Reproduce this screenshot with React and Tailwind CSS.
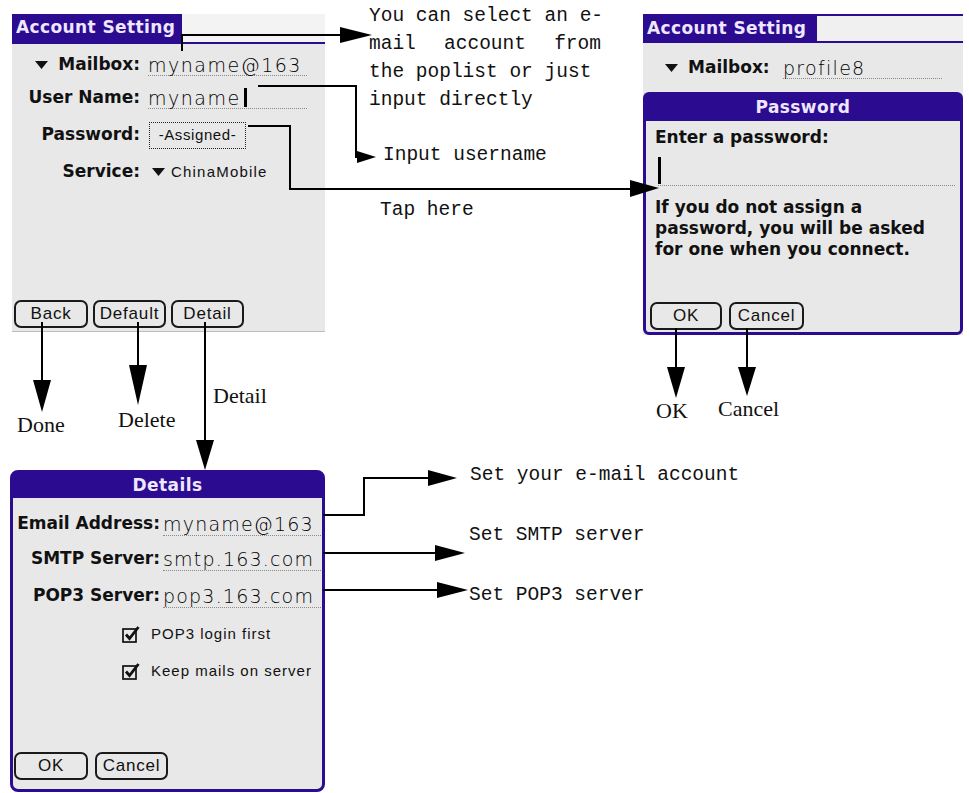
import React from "react";

const bold = "font-['DejaVu_Sans',sans-serif] font-bold";
const thin = "font-['DejaVu_Sans',sans-serif] font-extralight";
const small = "font-['Liberation_Sans',sans-serif]";
const mono = "font-['Liberation_Mono',monospace] text-[19.5px] leading-[28px] text-[#111] whitespace-pre";
const serif = "font-['Liberation_Serif',serif] text-[22px] leading-[28px] text-[#111]";

function Tri() {
  return (
    <svg width="13" height="8" viewBox="0 0 13 8" className="shrink-0">
      <path d="M0 0H13L6.5 8Z" fill="#111" />
    </svg>
  );
}

function Check() {
  return (
    <svg width="18" height="18" viewBox="0 0 18 18" className="shrink-0">
      <rect x="1" y="4" width="13" height="13" fill="none" stroke="#111" strokeWidth="1.7" />
      <path d="M4 9.5 L7.5 13.5 L16.5 2" fill="none" stroke="#111" strokeWidth="2.8" />
    </svg>
  );
}

function PalmButton({ children, className }) {
  return (
    <div
      className={`h-[28px] border-2 border-[#1a1a1a] rounded-[7px] flex items-center justify-center text-[17px] tracking-[0.8px] text-[#111] ${small} ${className}`}
    >
      {children}
    </div>
  );
}

function Arrows() {
  const tri = (pts) => <polygon points={pts} fill="#000" />;
  const ln = (d) => <path d={d} fill="none" stroke="#000" strokeWidth="2" />;
  return (
    <svg width="969" height="793" viewBox="0 0 969 793" className="absolute left-0 top-0 pointer-events-none">
      {ln("M182 51 V35 H342")}
      {tri("340,27 340,43 372,35")}
      {ln("M258 86 H356 V157 H360")}
      {tri("357,151 357,163 376,157")}
      {ln("M248 126 H290 V189 H632")}
      {tri("630,180 630,197 659,188")}
      {ln("M42 322 V382")}
      {tri("33,380 51,380 42,412")}
      {ln("M138 322 V367")}
      {tri("129,365 147,365 138,405")}
      {ln("M205 322 V442")}
      {tri("196,440 214,440 205,470")}
      {ln("M676 328 V369")}
      {tri("667,367 685,367 676,398")}
      {ln("M747 328 V369")}
      {tri("738,367 756,367 747,396")}
      {ln("M323 515 H364 V478 H430")}
      {tri("428,470 428,486 457,478")}
      {ln("M323 553 H437")}
      {tri("435,545 435,561 465,553")}
      {ln("M323 590 H439")}
      {tri("437,582 437,598 468,590")}
    </svg>
  );
}

function AccountPanel() {
  return (
    <div className="absolute left-[12px] top-[14px] w-[313px] h-[318px] bg-[#e8e8e8] flex flex-col border-b border-[#bdbdbd]">
      <div className="flex h-[30px] bg-[#f3f3f3] border-b-2 border-[#2b0b8f]">
        <div className={`w-[170px] h-full bg-[#2b0b8f] text-[#efe6ff] text-[17px] tracking-[0.4px] pl-[4px] flex items-center ${bold}`}>
          Account Setting
        </div>
      </div>
      <div className="grid grid-cols-[128px_1fr] gap-x-[8px] pt-[6px]">
        <div className={`h-[30px] flex items-center justify-end gap-[10px] text-[17px] text-[#111] ${bold}`}>
          <Tri />
          <span>Mailbox:</span>
        </div>
        <div className="h-[30px] flex items-center">
          <div className={`w-[159px] h-[22px] leading-[22px] text-[19px] tracking-[1.5px] text-black border-b border-dotted border-[#8a8a8a] whitespace-nowrap ${thin}`}>
            myname@163
          </div>
        </div>
        <div className={`h-[36px] flex items-center justify-end text-[17px] text-[#111] ${bold}`}>User Name:</div>
        <div className="h-[36px] flex items-center">
          <div className={`w-[159px] h-[22px] leading-[22px] text-[19px] tracking-[1.5px] text-black border-b border-dotted border-[#8a8a8a] flex items-center ${thin}`}>
            <span>myname</span>
            <span className="w-[3px] h-[19px] bg-black ml-[3px]" />
          </div>
        </div>
        <div className={`h-[38px] flex items-center justify-end text-[17px] text-[#111] ${bold}`}>Password:</div>
        <div className="h-[38px] flex items-center">
          <div className={`ml-[1px] w-[97px] h-[27px] border border-dotted border-[#222] flex items-center justify-center text-[15px] tracking-[0.6px] text-[#111] ${small}`}>
            -Assigned-
          </div>
        </div>
        <div className={`h-[36px] flex items-center justify-end text-[17px] text-[#111] ${bold}`}>Service:</div>
        <div className={`h-[36px] flex items-center gap-[6px] pl-[4px] text-[15px] tracking-[1.2px] text-[#111] ${small}`}>
          <Tri />
          <span>ChinaMobile</span>
        </div>
      </div>
      <div className="flex-1" />
      <div className="flex gap-[5px] pl-[2px] pb-[3px]">
        <PalmButton className="w-[74px]">Back</PalmButton>
        <PalmButton className="w-[73px]">Default</PalmButton>
        <PalmButton className="w-[73px]">Detail</PalmButton>
      </div>
    </div>
  );
}

function PasswordPanel() {
  return (
    <div className="absolute left-[643px] top-[14px] w-[320px] h-[321px] bg-[#e8e8e8] flex flex-col">
      <div className="flex h-[29px]">
        <div className={`w-[174px] h-full bg-[#2b0b8f] text-[#efe6ff] text-[17px] tracking-[0.4px] pl-[4px] flex items-center ${bold}`}>
          Account Setting
        </div>
        <div className="flex-1 bg-[#f0f0f0] border-t-2 border-b-2 border-[#2b0b8f]" />
      </div>
      <div className="h-[49px] flex items-center pl-[22px]">
        <Tri />
        <span className={`ml-[10px] w-[90px] text-[17px] text-[#111] ${bold}`}>Mailbox:</span>
        <div className={`ml-[5px] w-[159px] h-[22px] leading-[22px] text-[19px] tracking-[1.3px] text-black border-b border-dotted border-[#8a8a8a] ${thin}`}>
          profile8
        </div>
      </div>
      <div className="flex-1 border-[3px] border-[#2b0b8f] rounded-[6px] flex flex-col bg-[#e8e8e8]">
        <div className={`h-[26px] bg-[#2b0b8f] text-[#efe6ff] text-[17px] tracking-[0.4px] flex items-center justify-center ${bold}`}>
          Password
        </div>
        <div className={`pt-[5px] pl-[9px] text-[17px] leading-[22px] text-[#111] ${bold}`}>Enter a password:</div>
        <div className="h-[38px] ml-[12px] mr-[5px] border-b border-dotted border-[#8a8a8a] flex items-end">
          <span className="w-[3px] h-[27px] bg-black mb-[1px]" />
        </div>
        <div className={`mt-[11px] pl-[9px] text-[17px] leading-[21px] text-[#111] ${bold}`}>
          If you do not assign a<br />
          password, you will be asked<br />
          for one when you connect.
        </div>
        <div className="flex-1" />
        <div className="flex gap-[7px] pl-[4px] pb-[2px]">
          <PalmButton className="w-[72px]">OK</PalmButton>
          <PalmButton className="w-[75px]">Cancel</PalmButton>
        </div>
      </div>
    </div>
  );
}

function DetailsPanel() {
  const label = `flex items-center justify-end text-[17px] text-[#111] whitespace-nowrap ${bold}`;
  const val = `w-[158px] h-[24px] leading-[24px] text-[19px] tracking-[1.2px] text-black border-b border-dotted border-[#8a8a8a] whitespace-nowrap ${thin}`;
  return (
    <div className="absolute left-[10px] top-[470px] w-[315px] h-[322px] border-[3px] border-[#2b0b8f] rounded-[8px] bg-[#e8e8e8] flex flex-col">
      <div className={`h-[25px] bg-[#2b0b8f] text-[#efe6ff] text-[17px] tracking-[0.4px] flex items-center justify-center ${bold}`}>
        Details
      </div>
      <div className="grid grid-cols-[147px_1fr] gap-x-[3px] pt-[9px]">
        <div className={`h-[34px] ${label}`}>Email Address:</div>
        <div className="h-[34px] flex items-center"><div className={val}>myname@163</div></div>
        <div className={`h-[36px] ${label}`}>SMTP Server:</div>
        <div className="h-[36px] flex items-center"><div className={val}>smtp.163.com</div></div>
        <div className={`h-[38px] ${label}`}>POP3 Server:</div>
        <div className="h-[38px] flex items-center"><div className={val}>pop3.163.com</div></div>
      </div>
      <div className={`h-[38px] flex items-center gap-[11px] pl-[109px] text-[15px] tracking-[1px] text-[#111] ${small}`}>
        <Check />
        <span>POP3 login first</span>
      </div>
      <div className={`h-[36px] flex items-center gap-[11px] pl-[109px] text-[15px] tracking-[1px] text-[#111] ${small}`}>
        <Check />
        <span>Keep mails on server</span>
      </div>
      <div className="flex-1" />
      <div className="flex gap-[7px] pl-[1px] pb-[9px]">
        <PalmButton className="w-[74px]">OK</PalmButton>
        <PalmButton className="w-[73px]">Cancel</PalmButton>
      </div>
    </div>
  );
}

export default function App() {
  return (
    <div className="relative w-[969px] h-[793px] bg-white overflow-hidden">
      <AccountPanel />
      <PasswordPanel />
      <DetailsPanel />

      <div className={`absolute left-[369px] top-[2px] w-[232px] ${mono}`}>
        <div>You can select an e-</div>
        <div className="flex justify-between">
          <span>mail</span>
          <span>account</span>
          <span>from</span>
        </div>
        <div>the poplist or just</div>
        <div>input directly</div>
      </div>
      <div className={`absolute left-[383px] top-[141px] ${mono}`}>Input username</div>
      <div className={`absolute left-[380px] top-[196px] ${mono}`}>Tap here</div>
      <div className={`absolute left-[470px] top-[461px] ${mono}`}>Set your e-mail account</div>
      <div className={`absolute left-[469px] top-[521px] ${mono}`}>Set SMTP server</div>
      <div className={`absolute left-[469px] top-[581px] ${mono}`}>Set POP3 server</div>

      <div className={`absolute left-[17px] top-[411px] ${serif}`}>Done</div>
      <div className={`absolute left-[118px] top-[406px] ${serif}`}>Delete</div>
      <div className={`absolute left-[213px] top-[382px] ${serif}`}>Detail</div>
      <div className={`absolute left-[656px] top-[397px] ${serif}`}>OK</div>
      <div className={`absolute left-[718px] top-[395px] ${serif}`}>Cancel</div>

      <Arrows />
    </div>
  );
}
